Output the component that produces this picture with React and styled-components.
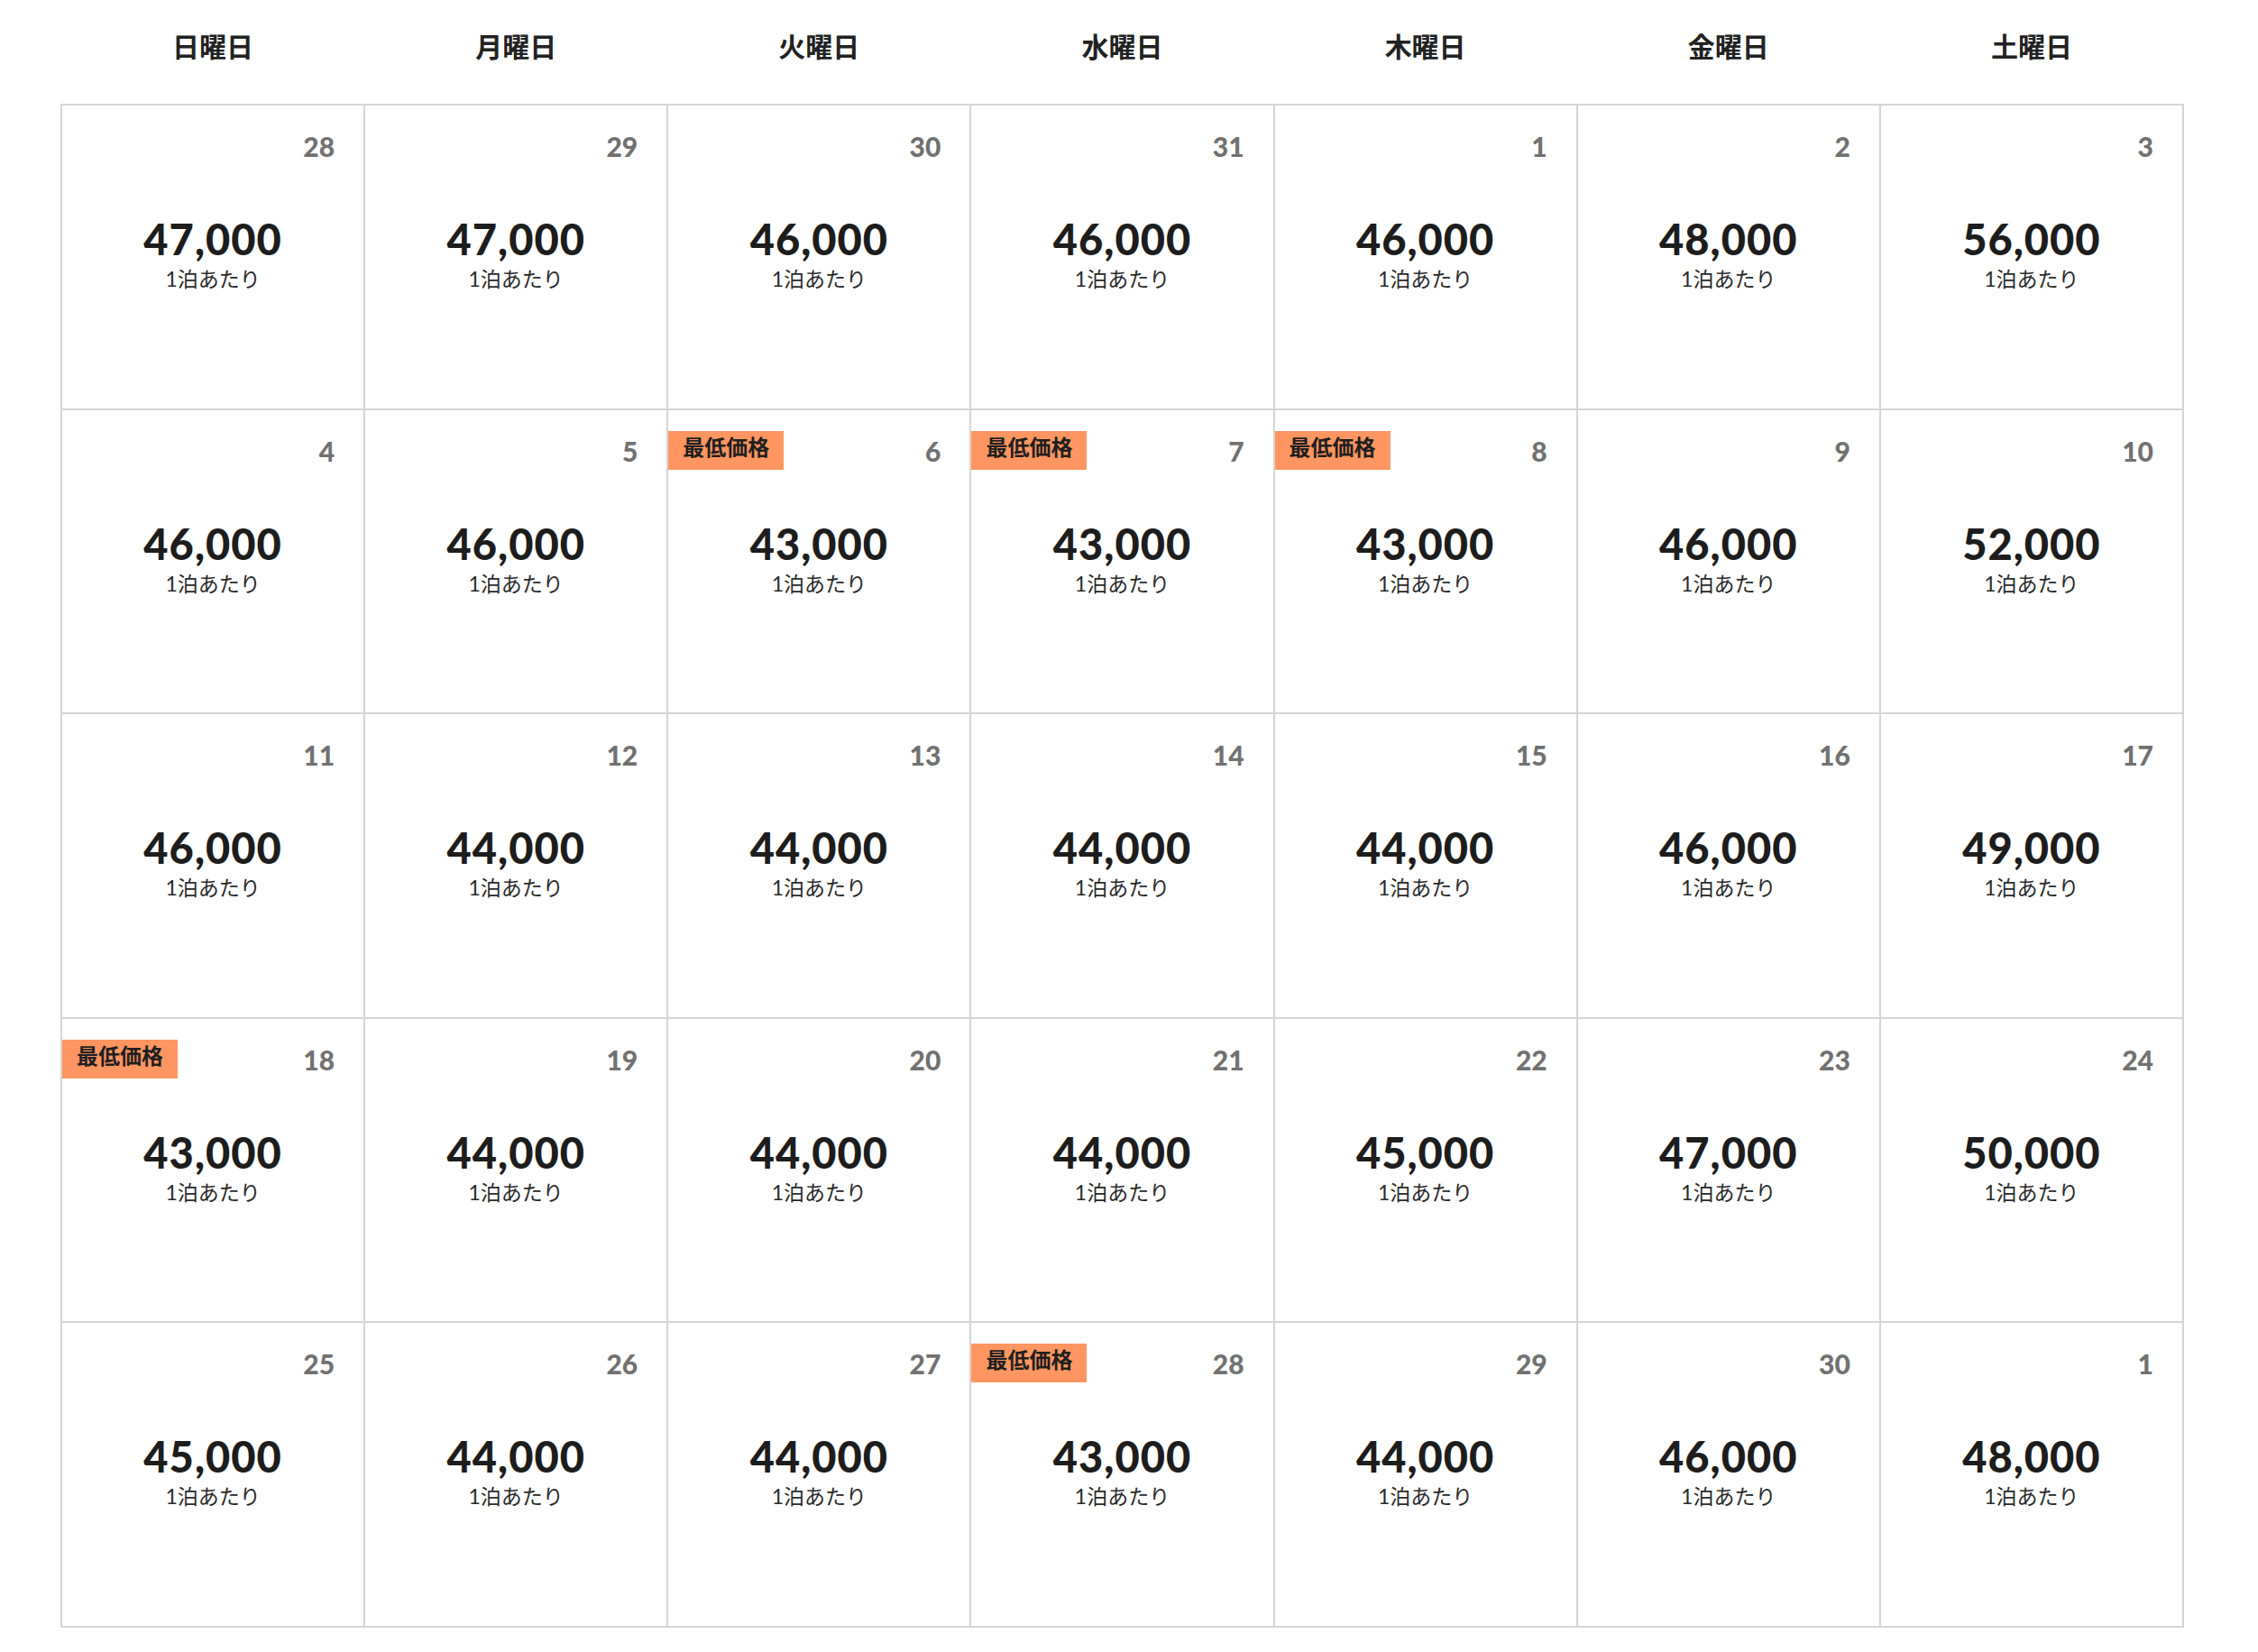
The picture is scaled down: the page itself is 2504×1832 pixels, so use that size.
import React from 'react';
import styled, { createGlobalStyle } from 'styled-components';

const GlobalStyle = createGlobalStyle`
    html, body {
        margin: 0;
        padding: 0;
        background: #ffffff;
    }
    body {
        font-family: "Lato", "Noto Sans CJK JP", sans-serif;
        color: #1f1f1f;
    }
`;

const weekdays = ['日曜日', '月曜日', '火曜日', '水曜日', '木曜日', '金曜日', '土曜日'];

const days = [
    [28, 47000], [29, 47000], [30, 46000], [31, 46000], [1, 46000], [2, 48000], [3, 56000],
    [4, 46000], [5, 46000], [6, 43000, true], [7, 43000, true], [8, 43000, true], [9, 46000], [10, 52000],
    [11, 46000], [12, 44000], [13, 44000], [14, 44000], [15, 44000], [16, 46000], [17, 49000],
    [18, 43000, true], [19, 44000], [20, 44000], [21, 44000], [22, 45000], [23, 47000], [24, 50000],
    [25, 45000], [26, 44000], [27, 44000], [28, 43000, true], [29, 44000], [30, 46000], [1, 48000],
];

export default function App() {
    return (
        <Page>
            <GlobalStyle />
            <Calendar>
                <WeekHeader>
                    {weekdays.map(day => <WeekDay key={day}>{day}</WeekDay>)}
                </WeekHeader>
                <Grid>
                    {days.map(([date, price, lowest], i) => (
                        <DayCell key={i} date={date} price={price} lowest={lowest} />
                    ))}
                </Grid>
            </Calendar>
        </Page>
    );
}

function DayCell(props) {
    const { date, price, lowest } = props;

    return (
        <Cell>
            {lowest && <Badge>最低価格</Badge>}
            <DateNum>{date}</DateNum>
            <Price>{price.toLocaleString('en-US')}</Price>
            <PerNight>1泊あたり</PerNight>
        </Cell>
    );
}

const Page = styled.div`
    padding: 0 82px 0 67px;
`;

const Calendar = styled.div`
    width: 2355px;
`;

const WeekHeader = styled.div`
    display: grid;
    grid-template-columns: repeat(7, 1fr);
    column-gap: 2px;
    padding: 0 2px;
    height: 100px;
    margin-bottom: 15px;
`;

const WeekDay = styled.div`
    display: flex;
    align-items: center;
    justify-content: center;
    font-family: "Noto Sans CJK JP", sans-serif;
    font-weight: 700;
    font-size: 30px;
    color: #222222;
`;

const Grid = styled.div`
    display: grid;
    grid-template-columns: repeat(7, 1fr);
    grid-auto-rows: 335.5px;
    gap: 2px;
    padding: 2px;
    background-color: #d5d5d5;
`;

const Cell = styled.div`
    position: relative;
    display: flex;
    flex-direction: column;
    align-items: center;
    background-color: #ffffff;
`;

const Badge = styled.div`
    position: absolute;
    top: 23px;
    left: 0;
    height: 43px;
    padding: 0 16px 9px;
    box-sizing: border-box;
    background-color: #ff9661;
    font-family: "Noto Sans CJK JP", sans-serif;
    font-weight: 700;
    font-size: 24px;
    line-height: 34px;
    color: #1f1f1f;
`;

const DateNum = styled.div`
    align-self: flex-end;
    margin: 30px 32px 0 0;
    font-family: "Lato", sans-serif;
    font-weight: 900;
    font-size: 30px;
    line-height: 30px;
    color: #717171;
`;

const Price = styled.div`
    margin-top: 65px;
    font-family: "Lato", sans-serif;
    font-weight: 900;
    font-size: 47px;
    line-height: 47px;
    letter-spacing: 1px;
    color: #1d1d1d;
`;

const PerNight = styled.div`
    margin-top: 9px;
    font-family: "Lato", "Noto Sans CJK JP", sans-serif;
    font-size: 23px;
    line-height: 22px;
    color: #2a2a2a;
`;
